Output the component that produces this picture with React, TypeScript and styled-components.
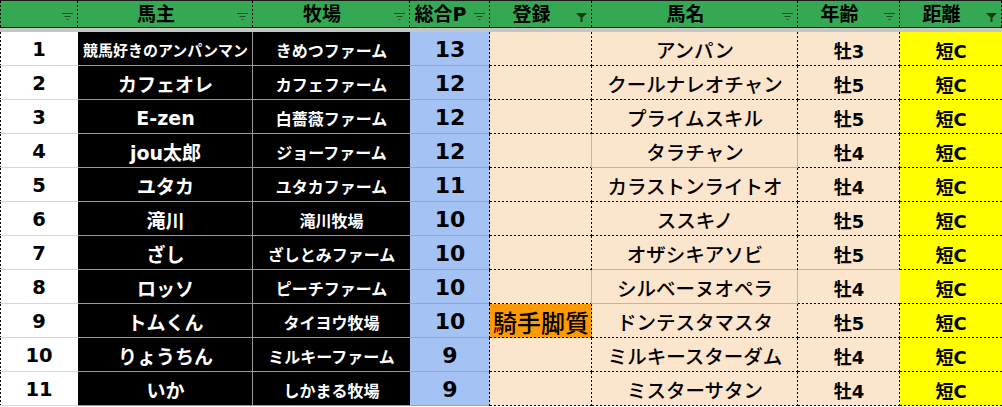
import React from 'react';
import styled, { createGlobalStyle } from 'styled-components';

const GlobalStyle = createGlobalStyle`
  html, body { margin: 0; padding: 0; background: #ffffff; }
  body { font-family: "DejaVu Sans", "Noto Sans CJK JP", sans-serif; overflow: hidden; }
`;

type Edge = 'n' | 'g' | 'd';

const dashV = (c: string) => `repeating-linear-gradient(to bottom, ${c} 0 2px, transparent 2px 4px)`;
const dashH = (c: string) => `repeating-linear-gradient(to right, ${c} 0 2px, transparent 2px 4px)`;
const solid = (c: string) => `linear-gradient(${c}, ${c})`;

interface EdgeProps {
  $bg: string;
  $r?: Edge;
  $b?: Edge;
  $l?: Edge;
  $rc?: string;
  $bc?: string;
}

const edges = (p: EdgeProps) => {
  const layers: string[] = [];
  if (p.$r && p.$r !== 'n') {
    const img = p.$r === 'd' ? dashV('#000') : solid(p.$rc || '#b7b7b7');
    layers.push(`${img} right top / 1px 100% no-repeat`);
  }
  if (p.$b && p.$b !== 'n') {
    const img = p.$b === 'd' ? dashH('#000') : solid(p.$bc || '#b7b7b7');
    layers.push(`${img} left bottom / 100% 1px no-repeat`);
  }
  if (p.$l && p.$l !== 'n') {
    const img = p.$l === 'd' ? dashV('#000') : solid('#b7b7b7');
    layers.push(`${img} left top / 1px 100% no-repeat`);
  }
  layers.push(p.$bg);
  return layers.join(', ');
};

const COLS = '78px 175px 157px 80px 102px 206px 102px 102px';

const Sheet = styled.div`
  width: 1002px;
  display: flex;
  flex-direction: column;
`;

const HeaderRow = styled.div`
  display: grid;
  grid-template-columns: ${COLS};
  height: 28px;
  box-sizing: border-box;
  border-top: 1px solid #1a1a1a;
  border-bottom: 2px solid #1a1a1a;
  background: #34a853;
`;

const FreezeBar = styled.div`
  height: 4px;
  background: #c6c6c6;
`;

const HeaderCell = styled.div<EdgeProps>`
  display: flex;
  align-items: flex-start;
  background: ${(p) => edges(p)};
  min-width: 0;
`;

const HeaderLabel = styled.span`
  flex: 1;
  text-align: center;
  font-family: "DejaVu Sans", "Noto Sans CJK JP", sans-serif;
  font-weight: 700;
  font-size: 19px;
  line-height: 26px;
  color: #000;
  white-space: nowrap;
`;

const FilterSlot = styled.span`
  width: 12px;
  margin: 11px 5px 0 2px;
  display: flex;
  justify-content: center;
`;

const BodyRow = styled.div`
  display: grid;
  grid-template-columns: ${COLS};
  height: 34px;
`;

interface CellProps extends EdgeProps {
  $color: string;
  $size: number;
  $weight: number;
}

const Cell = styled.div<CellProps>`
  display: flex;
  align-items: center;
  justify-content: center;
  box-sizing: border-box;
  padding-top: 1px;
  background: ${(p) => edges(p)};
  color: ${(p) => p.$color};
  font-family: "DejaVu Sans", "Noto Sans CJK JP", sans-serif;
  font-size: ${(p) => p.$size}px;
  font-weight: ${(p) => p.$weight};
  white-space: nowrap;
  overflow: hidden;
  min-width: 0;
`;

const FilterLines = () => (
  <svg width="11" height="9" viewBox="0 0 11 9">
    <rect x="0" y="1" width="11" height="1" fill="#1f4d2c" />
    <rect x="2.5" y="4" width="6" height="1" fill="#1f4d2c" />
    <rect x="4.5" y="7" width="2" height="1" fill="#1f4d2c" />
  </svg>
);

const FilterFunnel = () => (
  <svg width="11" height="10" viewBox="0 0 11 10">
    <path d="M0 1 H11 L6.5 5.5 V10 H4.5 V5.5 Z" fill="#143a1e" />
  </svg>
);

const headers: { label: string; active?: boolean }[] = [
  { label: '' },
  { label: '馬主' },
  { label: '牧場' },
  { label: '総合P' },
  { label: '登録', active: true },
  { label: '馬名' },
  { label: '年齢' },
  { label: '距離', active: true },
];

interface Row {
  n: number;
  owner: string;
  farm: string;
  p: number;
  reg: string;
  horse: string;
  age: string;
  dist: string;
}

const rows: Row[] = [
  { n: 1, owner: '競馬好きのアンパンマン', farm: 'きめつファーム', p: 13, reg: '', horse: 'アンパン', age: '牡3', dist: '短C' },
  { n: 2, owner: 'カフェオレ', farm: 'カフェファーム', p: 12, reg: '', horse: 'クールナレオチャン', age: '牡5', dist: '短C' },
  { n: 3, owner: 'E-zen', farm: '白薔薇ファーム', p: 12, reg: '', horse: 'プライムスキル', age: '牡5', dist: '短C' },
  { n: 4, owner: 'jou太郎', farm: 'ジョーファーム', p: 12, reg: '', horse: 'タラチャン', age: '牡4', dist: '短C' },
  { n: 5, owner: 'ユタカ', farm: 'ユタカファーム', p: 11, reg: '', horse: 'カラストンライトオ', age: '牡4', dist: '短C' },
  { n: 6, owner: '滝川', farm: '滝川牧場', p: 10, reg: '', horse: 'ススキノ', age: '牡5', dist: '短C' },
  { n: 7, owner: 'ざし', farm: 'ざしとみファーム', p: 10, reg: '', horse: 'オザシキアソビ', age: '牡5', dist: '短C' },
  { n: 8, owner: 'ロッソ', farm: 'ピーチファーム', p: 10, reg: '', horse: 'シルベーヌオペラ', age: '牡4', dist: '短C' },
  { n: 9, owner: 'トムくん', farm: 'タイヨウ牧場', p: 10, reg: '騎手脚質', horse: 'ドンテスタマスタ', age: '牡5', dist: '短C' },
  { n: 10, owner: 'りょうちん', farm: 'ミルキーファーム', p: 9, reg: '', horse: 'ミルキースターダム', age: '牡4', dist: '短C' },
  { n: 11, owner: 'いか', farm: 'しかまる牧場', p: 9, reg: '', horse: 'ミスターサタン', age: '牡4', dist: '短C' },
];

const PEACH = '#fce5cd';

export default function App() {
  return (
    <>
      <GlobalStyle />
      <Sheet>
        <HeaderRow>
          {headers.map((h, i) => (
            <HeaderCell key={i} $bg="#34a853" $r="d" $l={i === 0 ? 'd' : 'n'}>
              <HeaderLabel>{h.label}</HeaderLabel>
              <FilterSlot>{h.active ? <FilterFunnel /> : <FilterLines />}</FilterSlot>
            </HeaderCell>
          ))}
        </HeaderRow>
        <FreezeBar />
        {rows.map((r) => {
          const n = r.n;
          const c4r: Edge = n === 4 || n === 8 ? 'g' : 'd';
          const c5r: Edge = n === 4 || n === 8 ? 'g' : 'd';
          const c5b: Edge = n === 4 || n === 7 || n === 8 ? 'g' : 'd';
          const c6r: Edge = n === 8 ? 'n' : 'd';
          const c6b: Edge = n === 7 ? 'g' : 'd';
          return (
            <BodyRow key={n}>
              <Cell $bg="#ffffff" $color="#000" $size={19.5} $weight={700} $l="d" $b="g" $bc="#d6d6d6">
                {n}
              </Cell>
              <Cell $bg="#000000" $color="#fff" $size={n === 1 ? 15 : 19} $weight={700} $r="g" $rc="#9a9a9a" $b="g" $bc="#9a9a9a">
                {r.owner}
              </Cell>
              <Cell $bg="#000000" $color="#fff" $size={16} $weight={700} $b="g" $bc="#9a9a9a">
                {r.farm}
              </Cell>
              <Cell $bg="#a4c2f4" $color="#000" $size={22} $weight={700} $r="d" $b="g" $bc="#8ea6cf">
                {r.p}
              </Cell>
              <Cell $bg={r.reg ? '#ff9900' : PEACH} $color="#000" $size={24} $weight={500} $r={c4r} $b="d">
                {r.reg}
              </Cell>
              <Cell $bg={PEACH} $color="#000" $size={19.5} $weight={500} $r={c5r} $b={c5b}>
                {r.horse}
              </Cell>
              <Cell $bg={PEACH} $color="#000" $size={18} $weight={700} $r={c6r} $b={c6b}>
                {r.age}
              </Cell>
              <Cell $bg="#ffff00" $color="#000" $size={18} $weight={700} $b="d">
                {r.dist}
              </Cell>
            </BodyRow>
          );
        })}
      </Sheet>
    </>
  );
}
